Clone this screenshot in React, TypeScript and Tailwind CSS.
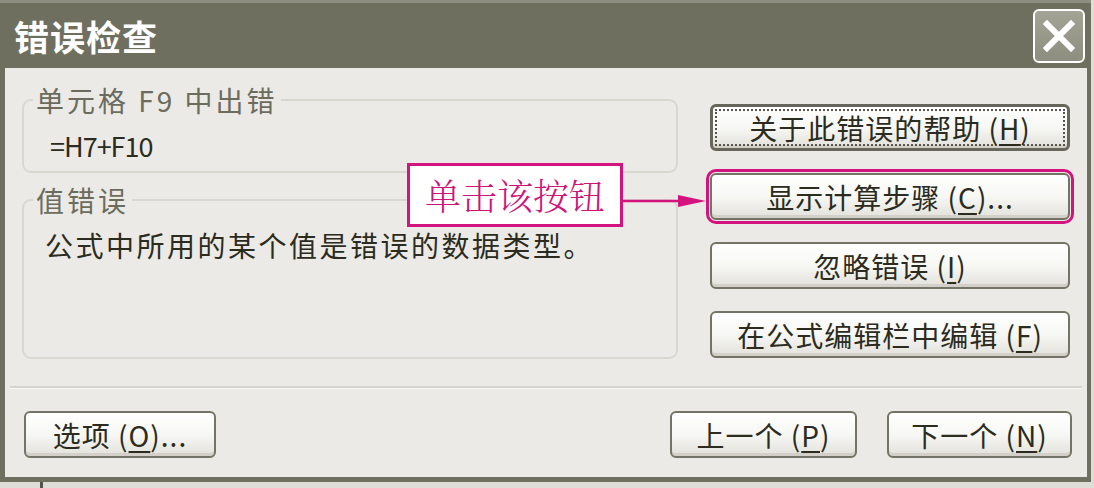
import type { ReactNode } from 'react'
import clsx from 'clsx'

const ui = "font-['Noto_Sans_CJK_SC','Noto_Sans',sans-serif]"

function XpButton({
  children,
  className,
  isDefault = false,
}: {
  children: ReactNode
  className?: string
  isDefault?: boolean
}) {
  return (
    <button
      type="button"
      className={clsx(
        'flex h-[47px] items-stretch rounded-[6px] bg-linear-to-b from-white via-[#f7f7f4] to-[#e2e1db] text-[28px] leading-none tracking-[1px] text-[#2b2b20] shadow-[inset_0_-3px_0_#d2d0c8]',
        isDefault ? 'border-[3px] border-[#66665a]' : 'border-2 border-[#747466]',
        className
      )}
    >
      <span
        className={clsx(
          'flex flex-1 items-center justify-center',
          isDefault && 'm-[2px] border-2 border-dotted border-[#55554a]'
        )}
      >
        {children}
      </span>
    </button>
  )
}

function GroupBox({
  title,
  children,
  className,
}: {
  title: string
  children: ReactNode
  className?: string
}) {
  return (
    <fieldset className={clsx('rounded-[9px] border-2 border-[#d9d8d0]', className)}>
      <legend className="ml-[9px] px-[3px] text-[28px] leading-[30px] tracking-[3px] text-[#6c6c5e]">
        {title}
      </legend>
      {children}
    </fieldset>
  )
}

export default function App() {
  return (
    <div className={clsx('relative h-[488px] w-[1094px] overflow-hidden bg-[#deded6]', ui)}>
      {/* window frame */}
      <div className="flex h-[482px] w-[1091px] flex-col border-t-[3px] border-[#8e8e80] bg-[#6f6f60]">
        {/* title bar */}
        <div className="flex h-[65px] items-center justify-between pl-[14px] pr-[6px]">
          <span className="text-[35px] font-bold leading-none tracking-[1px] text-white">错误检查</span>
          <div className="flex h-[54px] w-[52px] items-center justify-center rounded-[6px] border-2 border-white bg-linear-to-b from-[#a3a396] to-[#8e8e80]">
            <svg width="32" height="32" viewBox="0 0 32 32">
              <path d="M4 4 L28 28 M28 4 L4 28" stroke="white" strokeWidth="6" strokeLinecap="square" />
            </svg>
          </div>
        </div>

        {/* client area */}
        <div className="mx-[5px] mb-[5px] mr-[4px] flex flex-1 flex-col bg-[#ebeae6]">
          <div className="flex gap-[32px] pl-[17px] pr-[17px] pt-[17px]">
            <div className="flex w-[656px] flex-col gap-[12px]">
              <GroupBox title="单元格 F9 中出错" className="h-[88px]">
                <div className="mt-[16px] pl-[26px] text-[27px] leading-[30px] tracking-[-1px] text-[#2b2b20]">
                  =H7+F10
                </div>
              </GroupBox>
              <GroupBox title="值错误" className="h-[174px]">
                <div className="mt-[15px] pl-[21px] text-[28px] leading-[30px] tracking-[2.5px] text-[#2b2b20]">
                  公式中所用的某个值是错误的数据类型。
                </div>
              </GroupBox>
            </div>

            <div className="flex w-[360px] flex-col gap-[22px] pt-[19px]">
              <XpButton isDefault>
                关于此错误的帮助 (<u className="underline-offset-4">H</u>)
              </XpButton>
              <XpButton className="outline-[3px] outline-offset-[1px] outline-[#d4147e] outline-solid">
                显示计算步骤 (<u className="underline-offset-4">C</u>)...
              </XpButton>
              <XpButton>
                忽略错误 (<u className="underline-offset-4">I</u>)
              </XpButton>
              <XpButton>
                在公式编辑栏中编辑 (<u className="underline-offset-4">F</u>)
              </XpButton>
            </div>
          </div>

          <div className="mx-[5px] mt-[27px] h-[3px] border-t-2 border-[#d6d5cd] bg-white/60" />

          <div className="mt-[22px] flex items-center pl-[19px] pr-[15px]">
            <XpButton className="h-[46px] w-[192px]">
              选项 (<u className="underline-offset-4">O</u>)...
            </XpButton>
            <div className="flex-1" />
            <XpButton className="h-[46px] w-[187px]">
              上一个 (<u className="underline-offset-4">P</u>)
            </XpButton>
            <XpButton className="ml-[30px] h-[46px] w-[185px]">
              下一个 (<u className="underline-offset-4">N</u>)
            </XpButton>
          </div>
        </div>
      </div>
      <div className="ml-[40px] h-[6px] w-[3px] bg-[#55554a]" />

      {/* annotation callout */}
      <div className="absolute left-[407px] top-[163px] flex h-[64px] w-[216px] items-center justify-center border-[3px] border-[#d4147e] bg-white">
        <span className="font-['Noto_Serif_CJK_SC','Noto_Sans_CJK_SC',serif] text-[36px] font-light leading-none text-[#cf1479]">
          单击该按钮
        </span>
      </div>
      <svg className="absolute left-[622px] top-[192px]" width="86" height="18" viewBox="0 0 86 18">
        <path d="M0 9 H60" stroke="#d4147e" strokeWidth="2.5" />
        <path d="M56 3 L84 9 L56 15 Z" fill="#d4147e" />
      </svg>
    </div>
  )
}
